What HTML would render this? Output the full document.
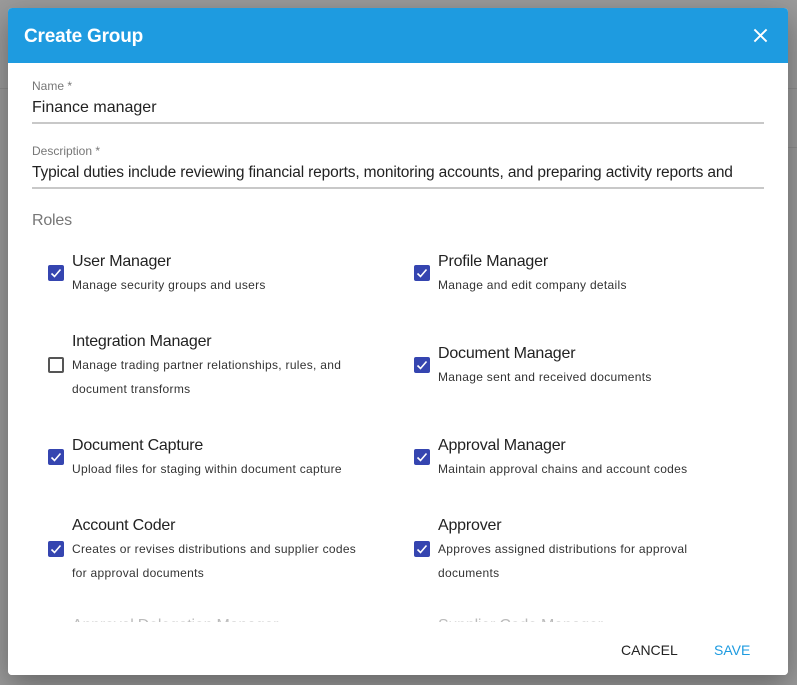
<!DOCTYPE html>
<html><head><style>
*{margin:0;padding:0;box-sizing:border-box}
body{width:797px;height:685px;background:#9b9b9b;font-family:"Liberation Sans",sans-serif;position:relative;overflow:hidden}
.bgline{position:absolute;background:#8e8e8e;height:1px}
.dlg{position:absolute;left:8px;top:8px;width:780px;height:667px;background:#fff;border-radius:4px;overflow:hidden;box-shadow:0 10px 30px rgba(0,0,0,.35)}
.hdr{height:55px;background:#1e9be0;color:#fff;font-size:19px;font-weight:bold;padding-left:16px;line-height:57px;position:relative;letter-spacing:-.2px}
.x{position:absolute;right:20px;top:20px}
.lbl{position:absolute;left:24px;font-size:12px;color:#777}
.val{position:absolute;left:24px;font-size:16px;color:#222;white-space:nowrap;width:732px;overflow:hidden}
.ul{position:absolute;left:24px;width:732px;height:2px;background:#c8c8c8}
.t{position:absolute;font-size:16px;color:#222;letter-spacing:-.2px}
.d{position:absolute;font-size:12px;color:#333;letter-spacing:.3px;line-height:24px}
.cb{position:absolute;width:16px;height:16px;background:#3545b0;border-radius:2px}
.cb svg{position:absolute;left:2px;top:2px}
.cb.off{background:#fff;border:2px solid #555}
.btn{position:absolute;top:634px;font-size:14px;letter-spacing:0}
</style></head><body>
<div class="bgline" style="left:0;top:88px;width:8px"></div>
<div class="bgline" style="left:788px;top:88px;width:9px"></div>
<div class="bgline" style="left:788px;top:147px;width:9px"></div>
<div class="dlg">
<div class="hdr">Create Group
<svg class="x" width="15" height="15" viewBox="0 0 16 16"><path d="M1.5 1.5L14.5 14.5M14.5 1.5L1.5 14.5" stroke="#fff" stroke-width="2"/></svg></div>
<div class="lbl" style="top:71px">Name *</div>
<div class="val" style="top:91px">Finance manager</div>
<div class="ul" style="top:114px"></div>
<div class="lbl" style="top:136px">Description *</div>
<div class="val" style="top:156px;font-size:15.5px;letter-spacing:-.15px">Typical duties include reviewing financial reports, monitoring accounts, and preparing activity reports and</div>
<div class="ul" style="top:179px"></div>
<div class="t" style="left:24px;top:204px;color:#777">Roles</div>

<div class="cb" style="left:40px;top:257px"><svg width="12" height="12" viewBox="0 0 12 12"><path d="M1.5 6.5L4.5 9.5L10.5 2.5" stroke="#fff" stroke-width="1.6" fill="none"/></svg></div>
<div class="t" style="left:64px;top:245px">User Manager</div>
<div class="d" style="left:64px;top:265px">Manage security groups and users</div>

<div class="cb" style="left:406px;top:257px"><svg width="12" height="12" viewBox="0 0 12 12"><path d="M1.5 6.5L4.5 9.5L10.5 2.5" stroke="#fff" stroke-width="1.6" fill="none"/></svg></div>
<div class="t" style="left:430px;top:245px">Profile Manager</div>
<div class="d" style="left:430px;top:265px">Manage and edit company details</div>

<div class="cb off" style="left:40px;top:349px"></div>
<div class="t" style="left:64px;top:325px">Integration Manager</div>
<div class="d" style="left:64px;top:345px">Manage trading partner relationships, rules, and<br>document transforms</div>

<div class="cb" style="left:406px;top:349px"><svg width="12" height="12" viewBox="0 0 12 12"><path d="M1.5 6.5L4.5 9.5L10.5 2.5" stroke="#fff" stroke-width="1.6" fill="none"/></svg></div>
<div class="t" style="left:430px;top:337px">Document Manager</div>
<div class="d" style="left:430px;top:357px">Manage sent and received documents</div>

<div class="cb" style="left:40px;top:441px"><svg width="12" height="12" viewBox="0 0 12 12"><path d="M1.5 6.5L4.5 9.5L10.5 2.5" stroke="#fff" stroke-width="1.6" fill="none"/></svg></div>
<div class="t" style="left:64px;top:429px">Document Capture</div>
<div class="d" style="left:64px;top:449px">Upload files for staging within document capture</div>

<div class="cb" style="left:406px;top:441px"><svg width="12" height="12" viewBox="0 0 12 12"><path d="M1.5 6.5L4.5 9.5L10.5 2.5" stroke="#fff" stroke-width="1.6" fill="none"/></svg></div>
<div class="t" style="left:430px;top:429px">Approval Manager</div>
<div class="d" style="left:430px;top:449px">Maintain approval chains and account codes</div>

<div class="cb" style="left:40px;top:533px"><svg width="12" height="12" viewBox="0 0 12 12"><path d="M1.5 6.5L4.5 9.5L10.5 2.5" stroke="#fff" stroke-width="1.6" fill="none"/></svg></div>
<div class="t" style="left:64px;top:509px">Account Coder</div>
<div class="d" style="left:64px;top:529px">Creates or revises distributions and supplier codes<br>for approval documents</div>

<div class="cb" style="left:406px;top:533px"><svg width="12" height="12" viewBox="0 0 12 12"><path d="M1.5 6.5L4.5 9.5L10.5 2.5" stroke="#fff" stroke-width="1.6" fill="none"/></svg></div>
<div class="t" style="left:430px;top:509px">Approver</div>
<div class="d" style="left:430px;top:529px">Approves assigned distributions for approval<br>documents</div>

<div class="t" style="left:64px;top:609px;color:#bbb">Approval Delegation Manager</div>
<div class="t" style="left:430px;top:609px;color:#bbb">Supplier Code Manager</div>
<div style="position:absolute;left:0;right:0;top:614px;bottom:0;background:#fff"></div>
<div class="btn" style="left:613px;color:#222">CANCEL</div>
<div class="btn" style="left:706px;color:#1e9be0">SAVE</div>
</div>
</body></html>
